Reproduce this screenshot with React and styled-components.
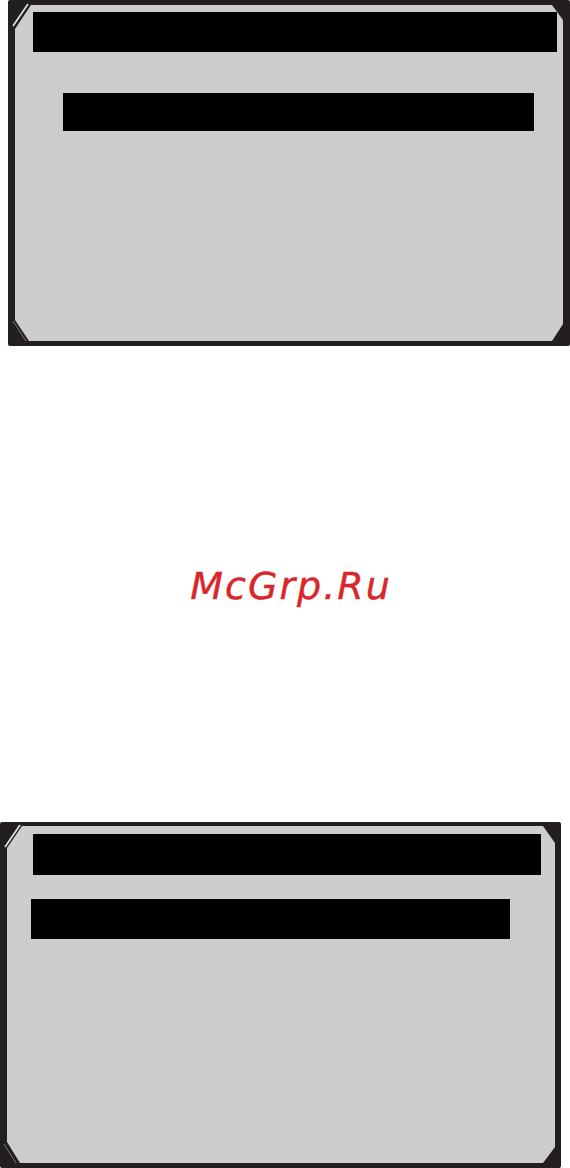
import React from "react";
import styled, { createGlobalStyle } from "styled-components";

const Global = createGlobalStyle`
  html, body { margin: 0; padding: 0; background: #ffffff; }
  body { font-family: "DejaVu Sans", Verdana, sans-serif; }
`;

const Page = styled.div`
  width: 570px;
  height: 1168px;
  display: flex;
  flex-direction: column;
  overflow: hidden;
`;

const Frame = styled.div`
  position: relative;
  box-sizing: border-box;
  margin-left: ${(p) => p.$ml}px;
  width: ${(p) => p.$w}px;
  height: ${(p) => p.$h}px;
  padding: ${(p) => p.$pad};
  background: #231f20;
  border-radius: 2px;
  display: flex;
  flex-shrink: 0;
`;

const Panel = styled.div`
  flex: 1;
  box-sizing: border-box;
  background: #cdcdcd;
  display: flex;
  flex-direction: column;
  padding-top: ${(p) => p.$pt}px;
  clip-path: ${(p) => p.$clip};
`;

const Bar = styled.div`
  background: #000000;
  margin-left: ${(p) => p.$ml}px;
  margin-top: ${(p) => p.$mt || 0}px;
  width: ${(p) => p.$w}px;
  height: ${(p) => p.$h}px;
  flex-shrink: 0;
`;

const Corner = styled.svg`
  position: absolute;
  left: ${(p) => p.$x}px;
  top: ${(p) => p.$y}px;
  overflow: visible;
  pointer-events: none;
`;

const Middle = styled.div`
  height: 476px;
  flex-shrink: 0;
  display: flex;
  align-items: center;
  justify-content: center;
  padding-left: 12px;
  box-sizing: border-box;
`;

const Watermark = styled.span`
  font-family: "DejaVu Sans", Verdana, sans-serif;
  font-style: italic;
  font-size: 38px;
  letter-spacing: 2px;
  color: #d8262a;
  line-height: 1;
  margin-top: 4px;
  -webkit-text-stroke: 0.4px #d8262a;
`;

function Stripes({ tl, bl }) {
  return (
    <>
      <Corner $x={tl[0]} $y={tl[1]} width="20" height="30">
        <line x1="0" y1={tl[2]} x2={tl[3]} y2="0" stroke="#e6e6e6" strokeWidth="1.6" />
      </Corner>
      <Corner $x={bl[0]} $y={bl[1]} width="20" height="30">
        <line x1="0" y1="0" x2={bl[2]} y2={bl[3]} stroke="#7a7a7a" strokeWidth="1" />
      </Corner>
    </>
  );
}

export default function App() {
  // top screen: frame 8..570 x 0..346, panel 15..563 x 5..341 (548 x 336)
  const clipTop =
    "polygon(0 24px, 16px 0, 537px 0, 548px 15px, 548px 319px, 537px 336px, 14px 336px, 0 315px)";
  // bottom screen: frame 0..561 x 822..1168, panel 7..555 x 826..1163 (548 x 337)
  const clipBottom =
    "polygon(0 22px, 15px 0, 536px 0, 548px 17px, 548px 321px, 536px 337px, 13px 337px, 0 316px)";

  return (
    <Page>
      <Global />
      <Frame $ml={8} $w={562} $h={346} $pad="5px 7px 5px 7px">
        <Panel $pt={7} $clip={clipTop}>
          <Bar $ml={18} $w={524} $h={40} />
          <Bar $ml={48} $mt={41} $w={471} $h={38} />
        </Panel>
        <Stripes tl={[5, 4, 22, 15]} bl={[5, 321, 13, 20]} />
      </Frame>

      <Middle>
        <Watermark>McGrp.Ru</Watermark>
      </Middle>

      <Frame $ml={0} $w={561} $h={346} $pad="4px 6px 5px 7px">
        <Panel $pt={8} $clip={clipBottom}>
          <Bar $ml={26} $w={508} $h={41} />
          <Bar $ml={24} $mt={24} $w={479} $h={40} />
        </Panel>
        <Stripes tl={[5, 3, 22, 15]} bl={[4, 322, 12, 19]} />
      </Frame>
    </Page>
  );
}
